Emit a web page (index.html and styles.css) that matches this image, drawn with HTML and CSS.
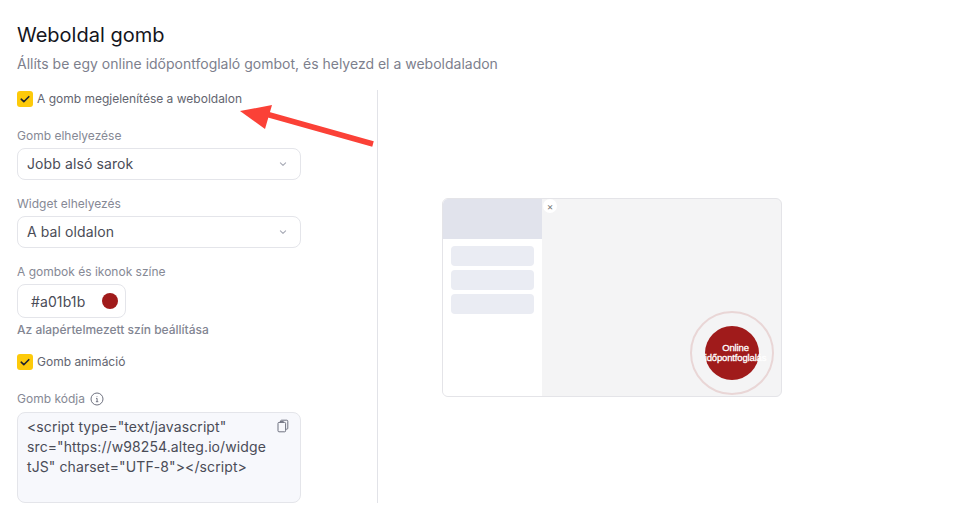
FILE: index.html
```html
<!DOCTYPE html>
<html lang="hu">
<head>
<meta charset="utf-8">
<title>Weboldal gomb</title>
<link rel="stylesheet" href="styles.css">
</head>
<body>
<main class="page">
  <h1 class="title">Weboldal gomb</h1>
  <p class="subtitle">Állíts be egy online időpontfoglaló gombot, és helyezd el a weboldaladon</p>
  <div class="columns">
    <section class="settings">
      <label class="check">
        <span class="box"><svg viewBox="0 0 16 16" width="16" height="16"><path d="M4.2 8.2l2.6 2.5 5-5" fill="none" stroke="#1f2430" stroke-width="1.6" stroke-linecap="round" stroke-linejoin="round"/></svg></span>
        <span>A gomb megjelenítése a weboldalon</span>
      </label>
      <div class="field field-first">
        <div class="label">Gomb elhelyezése</div>
        <div class="select"><span>Jobb alsó sarok</span><svg class="chev" viewBox="0 0 10 10" width="10" height="10"><path d="M2.4 3.9L5 6.3l2.6-2.4" fill="none" stroke="#a5a8b4" stroke-width="1.1" stroke-linecap="round" stroke-linejoin="round"/></svg></div>
      </div>
      <div class="field">
        <div class="label">Widget elhelyezés</div>
        <div class="select"><span>A bal oldalon</span><svg class="chev" viewBox="0 0 10 10" width="10" height="10"><path d="M2.4 3.9L5 6.3l2.6-2.4" fill="none" stroke="#a5a8b4" stroke-width="1.1" stroke-linecap="round" stroke-linejoin="round"/></svg></div>
      </div>
      <div class="field">
        <div class="label">A gombok és ikonok színe</div>
        <div class="color"><span>#a01b1b</span><i class="swatch"></i></div>
        <div class="reset">Az alapértelmezett szín beállítása</div>
      </div>
      <label class="check check-anim">
        <span class="box"><svg viewBox="0 0 16 16" width="16" height="16"><path d="M4.2 8.2l2.6 2.5 5-5" fill="none" stroke="#1f2430" stroke-width="1.6" stroke-linecap="round" stroke-linejoin="round"/></svg></span>
        <span>Gomb animáció</span>
      </label>
      <div class="field field-code">
        <div class="label label-info">Gomb kódja
          <svg viewBox="0 0 14 14" width="14" height="14"><circle cx="7" cy="7" r="6" fill="none" stroke="#6f7280" stroke-width="1"/><path d="M6 6.4h1.1v3.2M5.9 9.7h2.4M7 4.2v.6" fill="none" stroke="#6f7280" stroke-width="1"/></svg>
        </div>
        <div class="code">
          <div class="code-text">&lt;script type="text/javascript" src="https://w98254.alteg.io/widgetJS" charset="UTF-8"&gt;&lt;/script&gt;</div>
          <svg class="copy" viewBox="0 0 14 14" width="14" height="14"><path d="M4.6 3.2V2.2a1 1 0 0 1 1-1h5.2a1 1 0 0 1 1 1v7a1 1 0 0 1-1 1h-.9" fill="none" stroke="#6f7280" stroke-width="1"/><rect x="2" y="3.4" width="7.6" height="9.4" rx="1" fill="#f7f8fc" stroke="#6f7280" stroke-width="1"/><path d="M4.2 3.4V2.6h3.2v.8" fill="none" stroke="#6f7280" stroke-width="1"/></svg>
        </div>
      </div>
    </section>
    <section class="preview">
      <div class="mock">
        <div class="mock-side">
          <div class="mock-head"></div>
          <div class="mock-rows"><i></i><i></i><i></i></div>
        </div>
        <div class="mock-main">
          <span class="mock-close">×</span>
          <div class="ring"><div class="disc"><span>Online</span><span>időpontfoglalás</span></div></div>
        </div>
      </div>
    </section>
  </div>
</main>
<svg class="arrow" width="150" height="50" viewBox="0 0 150 50"><path d="M133 44L26 14" fill="none" stroke="#fb4137" stroke-width="5.5"/><path d="M0 11L32 5L25 29Z" fill="#fb4137"/></svg>
</body>
</html>
```
FILE: styles.css
```css
* { box-sizing: border-box; }
html, body { margin: 0; height: 100%; background: #fff; overflow: hidden; }
body { font-family: Inter, "Liberation Sans", sans-serif; color: #2b2d38; position: relative; }
.page { padding: 23px 17px 0; }
.title { margin: 0; font-size: 20px; line-height: 24px; font-weight: 400; color: #14151c; }
.subtitle { margin: 6px 0 0; font-size: 14px; line-height: 22px; color: #7d808d; }
.columns { display: flex; margin-top: 15px; height: 413px; }
.settings { width: 361px; border-right: 1px solid #e2e3e8; padding: 1px 76px 0 0; }
.check { display: flex; align-items: center; gap: 4px; font-size: 12px; line-height: 16px; color: #63656f; }
.box { width: 16px; height: 16px; border-radius: 3px; background: #fdca0a; display: block; }
.box svg { display: block; }
.field { margin-top: 16px; }
.field-first { margin-top: 21px; }
.label { font-size: 12px; line-height: 16px; color: #868995; margin-bottom: 4px; }
.label-info { display: flex; align-items: center; gap: 5px; margin-bottom: 5px; }
.select { height: 32px; border: 1px solid #e4e5ea; border-radius: 8px; padding: 0 12px 1px 9px; display: flex; align-items: center; justify-content: space-between; font-size: 14px; color: #4a4c57; letter-spacing: .1px; }
.select .chev { margin-top: 1px; }
.color { width: 109px; height: 34px; border: 1px solid #e4e5ea; border-radius: 8px; padding: 0 7px 0 13px; display: flex; align-items: center; justify-content: space-between; font-size: 14px; color: #4a4c57; letter-spacing: .1px; }
.swatch { width: 16px; height: 16px; border-radius: 50%; background: #a01b1b; }
.reset { font-size: 12px; line-height: 16px; font-weight: 500; margin-top: 4px; color: #828592; }
.check-anim { margin-top: 16px; }
.field-code { margin-top: 21px; }
.code { position: relative; height: 91px; background: #f7f8fc; border: 1px solid #e4e5ea; border-radius: 8px; padding: 4px 31px 4px 9px; font-size: 14px; line-height: 20px; color: #4a4c57; }
.code-text { overflow-wrap: anywhere; letter-spacing: .1px; }
.copy { position: absolute; top: 6px; right: 10px; }
.preview { flex: 1; display: flex; padding: 108px 0 0 64px; }
.mock { width: 340px; height: 199px; border: 1px solid #e4e4e8; border-radius: 6px; display: flex; overflow: hidden; background: #f4f4f5; }
.mock-side { width: 99px; background: #fff; display: flex; flex-direction: column; }
.mock-head { height: 40px; background: #e1e3ec; }
.mock-rows { padding: 7px 8px; display: flex; flex-direction: column; gap: 4px; }
.mock-rows i { display: block; height: 20px; border-radius: 4px; background: #eaecf3; }
.mock-main { flex: 1; position: relative; }
.mock-close { position: absolute; left: 1px; top: 0; width: 14px; height: 14px; border-radius: 50%; background: #fff; font-size: 10px; line-height: 14px; text-align: center; color: #777; }
.ring { position: absolute; left: 148px; top: 112px; width: 84px; height: 84px; border-radius: 50%; border: 2px solid #e9d6d6; display: flex; align-items: center; justify-content: center; }
.disc { width: 54px; height: 54px; border-radius: 50%; background: #a01b1b; color: #fff; font-family: "Liberation Sans", sans-serif; font-size: 9.5px; line-height: 10px; letter-spacing: -.15px; padding-left: 7px; display: flex; flex-direction: column; align-items: center; justify-content: center; white-space: nowrap; -webkit-text-stroke: .3px #fff; }
.arrow { position: absolute; left: 240px; top: 100px; }
```
